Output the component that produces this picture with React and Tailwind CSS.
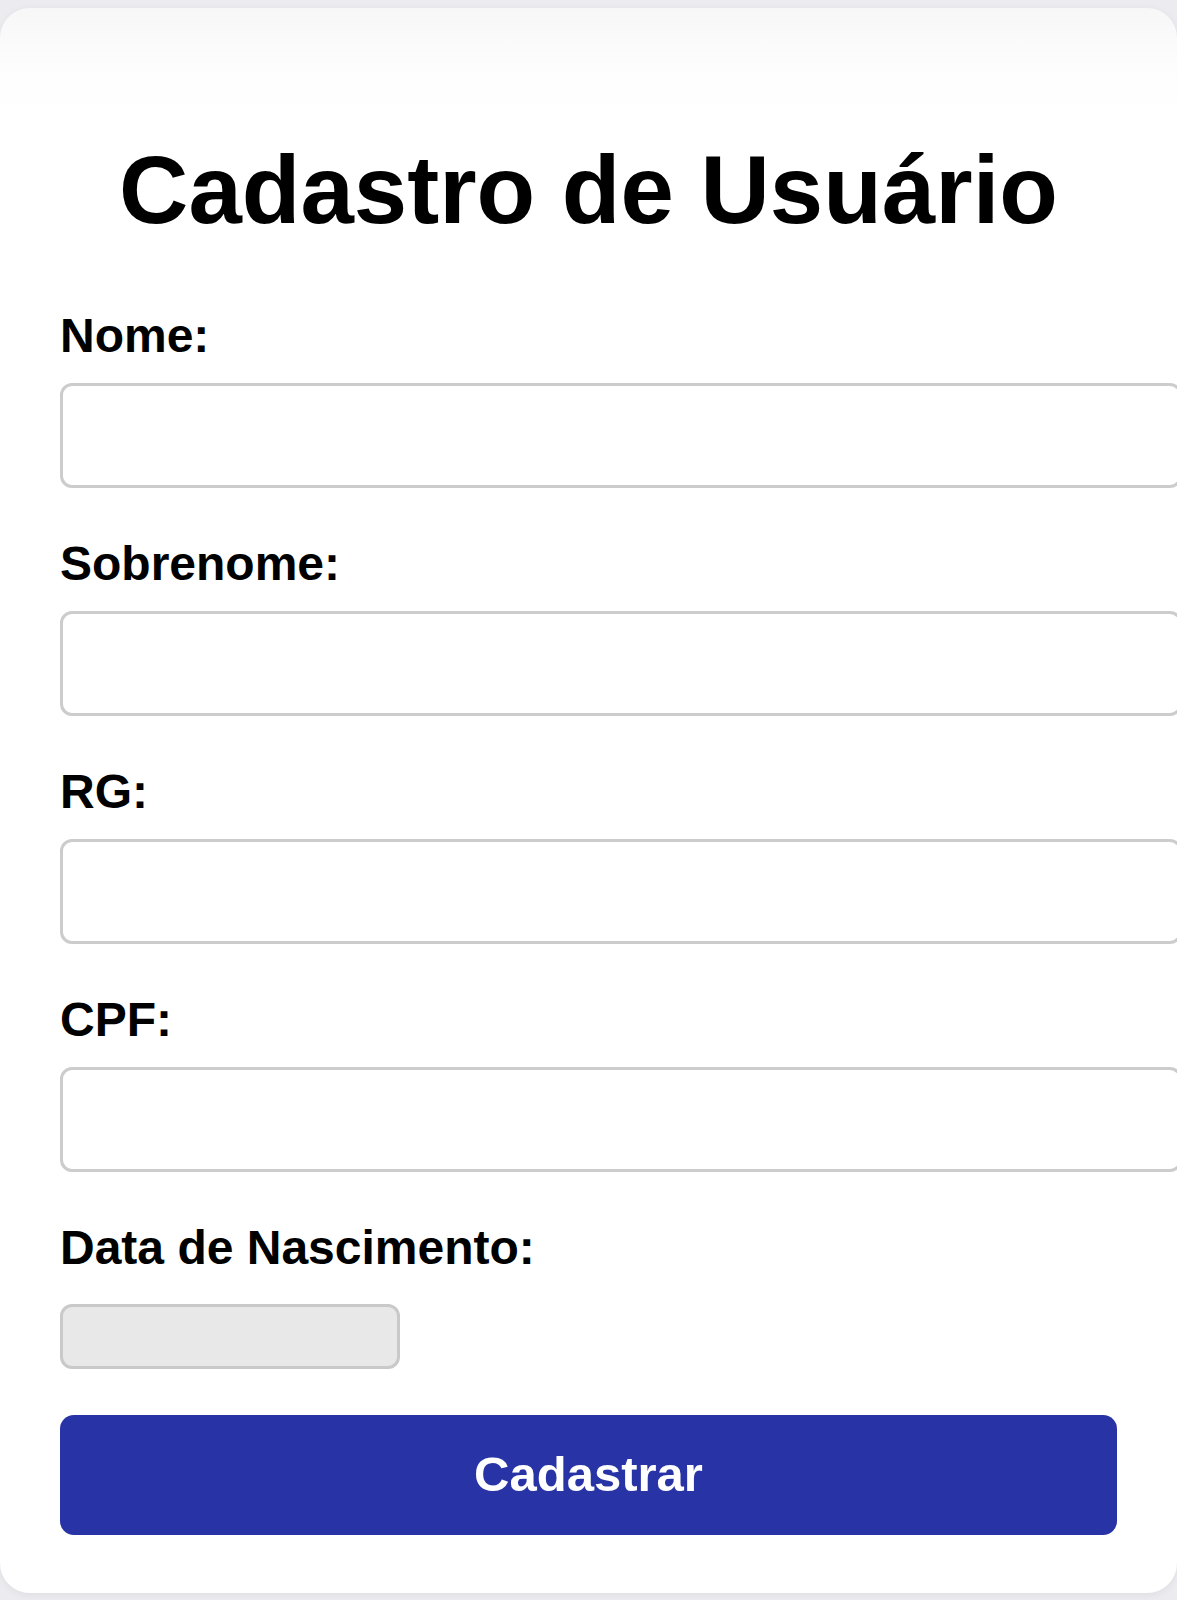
import React from "react";

const fields = [
  { id: "nome", label: "Nome:" },
  { id: "sobrenome", label: "Sobrenome:" },
  { id: "rg", label: "RG:" },
  { id: "cpf", label: "CPF:" },
];

export default function App() {
  return (
    <div className="min-h-screen overflow-hidden bg-[#ebebf0] pt-[8px] font-['Liberation_Sans',Arial,sans-serif] text-black">
      <div className="rounded-[30px] bg-[linear-gradient(to_bottom,#f7f7f7,#fdfdfd_60px,#ffffff_120px)] px-[60px] pt-[127px] pb-[58px] shadow-[0_2px_8px_rgba(0,0,0,0.06)]">
        <h1 className="text-center text-[96px] font-bold leading-[110px]">Cadastro de Usuário</h1>

        <form className="mt-[63px] flex flex-col" onSubmit={(e) => e.preventDefault()}>
          {fields.map((f) => (
            <div key={f.id} className="flex flex-col">
              <label htmlFor={f.id} className="mb-[20px] text-[48px] font-bold leading-[55px]">
                {f.label}
              </label>
              <input
                id={f.id}
                type="text"
                className="mb-[48px] h-[105px] w-[1122px] shrink-0 rounded-[12px] border-[3px] border-[#cccccc] bg-white px-[30px] text-[47px] outline-none"
              />
            </div>
          ))}

          <label htmlFor="nascimento" className="mb-[29px] text-[48px] font-bold leading-[55px]">
            Data de Nascimento:
          </label>
          <div
            id="nascimento"
            className="mb-[46px] h-[65px] w-[340px] rounded-[12px] border-[3px] border-[#c9c9c9] bg-[#e8e8e8]"
          />

          <button
            type="submit"
            className="h-[120px] w-full rounded-[14px] bg-[#2834a5] text-[49px] font-bold text-white"
          >
            Cadastrar
          </button>
        </form>
      </div>
    </div>
  );
}
